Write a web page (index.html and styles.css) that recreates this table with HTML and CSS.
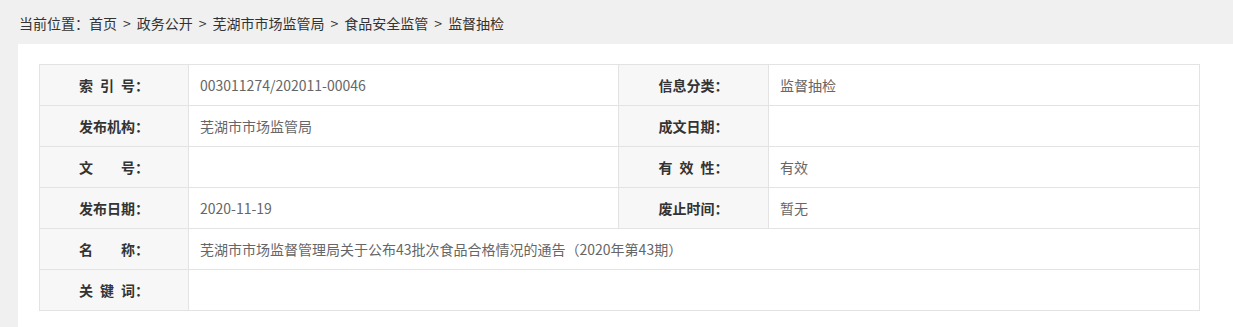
FILE: index.html
```html
<!DOCTYPE html>
<html lang="zh-CN">
<head>
<meta charset="utf-8">
<title>监督抽检</title>
<link rel="stylesheet" href="styles.css">
</head>
<body>
<div class="crumb">当前位置：<a>首页</a><span class="sep">&gt;</span><a>政务公开</a><span class="sep">&gt;</span><a>芜湖市市场监管局</a><span class="sep">&gt;</span><a>食品安全监管</a><span class="sep">&gt;</span><a>监督抽检</a></div>
<div class="panel">
  <table class="info">
    <colgroup>
      <col class="c-label"><col class="c-val"><col class="c-label2"><col class="c-val2">
    </colgroup>
    <tr>
      <th>索&ensp;引&ensp;号：</th><td>003011274/202011-00046</td>
      <th>信息分类：</th><td>监督抽检</td>
    </tr>
    <tr>
      <th>发布机构：</th><td>芜湖市市场监管局</td>
      <th>成文日期：</th><td></td>
    </tr>
    <tr>
      <th>文&emsp;&emsp;号：</th><td></td>
      <th>有&ensp;效&ensp;性：</th><td>有效</td>
    </tr>
    <tr>
      <th>发布日期：</th><td>2020-11-19</td>
      <th>废止时间：</th><td>暂无</td>
    </tr>
    <tr>
      <th>名&emsp;&emsp;称：</th><td colspan="3">芜湖市市场监督管理局关于公布43批次食品合格情况的通告（2020年第43期）</td>
    </tr>
    <tr>
      <th>关&ensp;键&ensp;词：</th><td colspan="3"></td>
    </tr>
  </table>
</div>
</body>
</html>
```

FILE: styles.css
```css
html, body {
  margin: 0;
  padding: 0;
}
body {
  background: #f0f0f0;
  font-family: "Noto Sans CJK SC", "Microsoft YaHei", sans-serif;
  font-size: 14px;
  color: #333;
}
.crumb {
  height: 44px;
  line-height: 46px;
  padding-left: 19px;
  color: #333;
  font-size: 14px;
}
.crumb a {
  color: #333;
  text-decoration: none;
}
.crumb .sep {
  margin: 0 6px;
}
.panel {
  background: #fff;
  margin-left: 18px;
  width: 1180px;
  padding: 20px 20px 17px 21px;
}
.info {
  width: 1160px;
  border-collapse: collapse;
  table-layout: fixed;
  border: 1px solid #e3e3e3;
}
.c-label { width: 149px; }
.c-val { width: 430px; }
.c-label2 { width: 150px; }
.c-val2 { width: 431px; }
.info th, .info td {
  border: 1px solid #e3e3e3;
  height: 40px;
  padding: 0;
  font-size: 14px;
  line-height: 20px;
}
.info th {
  background: #f7f7f7;
  color: #333;
  font-weight: bold;
  text-align: center;
}
.info td {
  color: #666;
  padding-left: 11px;
  text-align: left;
}
```
